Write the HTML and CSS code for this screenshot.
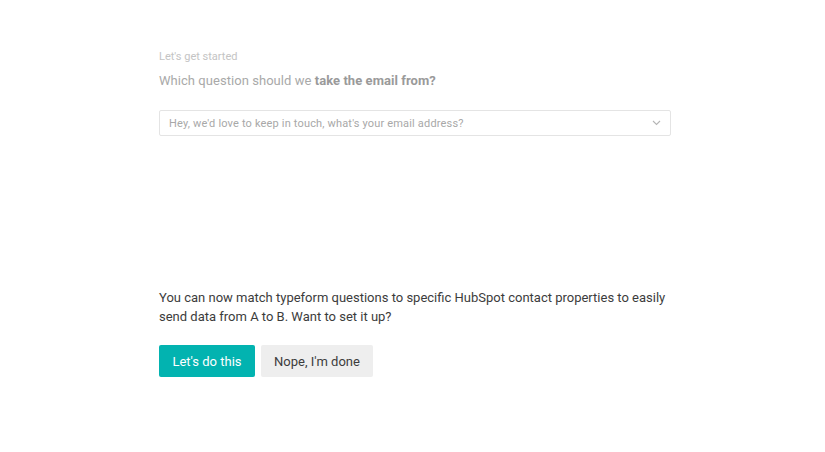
FILE: index.html
```html
<!DOCTYPE html>
<html>
<head>
<meta charset="utf-8">
<link rel="stylesheet" href="styles.css">
</head>
<body>
<div class="page">
  <div class="setup">
    <div class="eyebrow">Let's get started</div>
    <div class="question">Which question should we <b>take the email from?</b></div>
    <div class="select">
      <span class="select-text">Hey, we'd love to keep in touch, what's your email address?</span>
      <svg class="chevron" width="9" height="6" viewBox="0 0 9 6"><path d="M1 1 L4.5 4.5 L8 1" fill="none" stroke="#b5b5b5" stroke-width="1.1"/></svg>
    </div>
  </div>
  <div class="prompt">
    <p class="prompt-text">You can now match typeform questions to specific HubSpot contact properties to easily send data from A to B. Want to set it up?</p>
    <div class="actions">
      <button class="btn btn-primary">Let's do this</button>
      <button class="btn btn-secondary">Nope, I'm done</button>
    </div>
  </div>
</div>
</body>
</html>
```
FILE: styles.css
```css
html, body {
  margin: 0;
  padding: 0;
  background: #ffffff;
}
body {
  font-family: Roboto, "Liberation Sans", sans-serif;
  -webkit-font-smoothing: antialiased;
}
.page {
  width: 512px;
  padding: 49px 0 0 159px;
}
.eyebrow {
  font-size: 11px;
  line-height: 16px;
  color: #c4c4c4;
}
.question {
  margin-top: 7px;
  font-size: 13px;
  line-height: 18px;
  color: #a9a9a9;
  letter-spacing: 0.05px;
}
.question b {
  font-weight: 700;
  color: #9a9a9a;
}
.select {
  margin-top: 20px;
  height: 24px;
  border: 1px solid #e4e4e4;
  border-radius: 2px;
  display: flex;
  align-items: center;
  justify-content: space-between;
  padding: 0 9px 0 9px;
}
.select-text {
  font-size: 11px;
  letter-spacing: 0.17px;
  color: #a8a8a8;
}
.chevron {
  display: block;
}
.prompt {
  margin-top: 152px;
}
.prompt-text {
  margin: 0;
  font-size: 13px;
  line-height: 19px;
  color: #3c3c3c;
  width: 520px;
}
.actions {
  margin-top: 19px;
  display: flex;
  gap: 6px;
}
.btn {
  height: 32px;
  border: none;
  border-radius: 2px;
  font-family: inherit;
  font-size: 13px;
  padding: 0 13px;
  cursor: pointer;
}
.btn-primary {
  background: #02b3b0;
  color: #ffffff;
  width: 96px;
}
.btn-secondary {
  background: #eeeeee;
  color: #3c3c3c;
  width: 112px;
}
```
